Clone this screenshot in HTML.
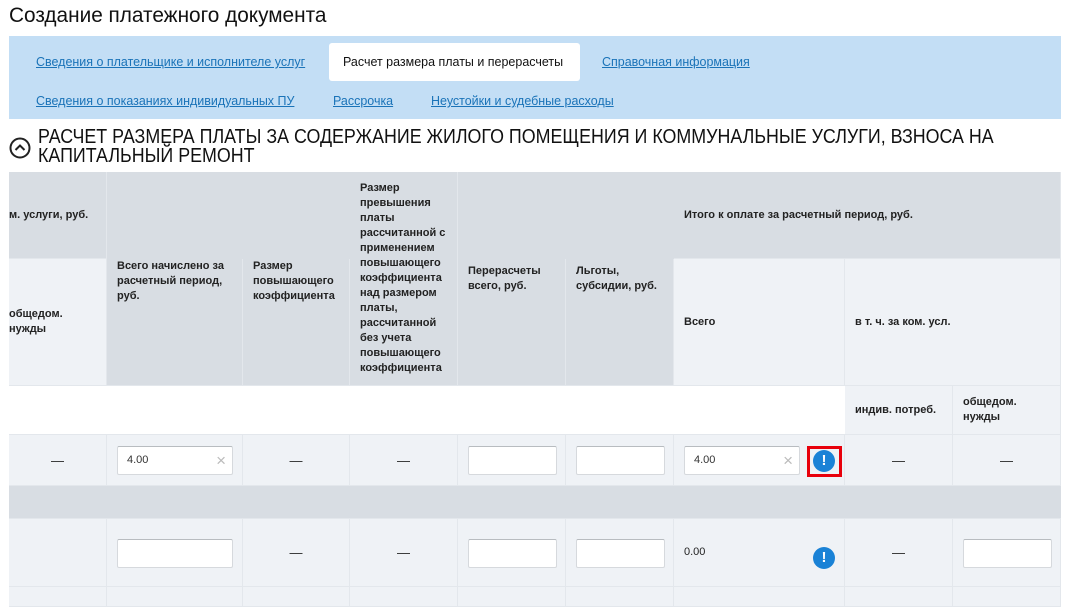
<!DOCTYPE html>
<html><head><meta charset="utf-8"><style>
body{margin:0;width:1074px;height:602px;overflow:hidden;background:#fff;font-family:"Liberation Sans",sans-serif;position:relative}
.a{position:absolute;box-sizing:border-box}
.n{transform-origin:0 0;white-space:nowrap}
.lk{color:#1a73b8;text-decoration:underline;font-size:13px;white-space:nowrap;transform:scaleX(0.96)}
.c{position:absolute;box-sizing:border-box;border-right:1px solid #e3e7ec;border-bottom:1px solid #e3e7ec;font-size:11px;font-weight:bold;color:#222;line-height:15px;padding:0 10px;display:flex;align-items:center}
.g{background:#d8dde3}.l{background:#eff2f6}.w{background:#fff}
.d{justify-content:center;font-weight:normal;font-size:13px}
.inp{position:absolute;background:#fff;border:1px solid #d6d9dd;border-top-color:#b8bcc0;border-radius:2px;box-sizing:border-box;height:29px;font-size:11px;color:#333;padding:7px 0 0 9px}
.ex{position:absolute;width:22px;height:22px;border-radius:50%;background:#1a82d6;color:#fff;font-weight:bold;font-size:15px;text-align:center;line-height:22px}
</style></head><body>
<div class="a n" style="left:9px;top:4px;font-size:21px;color:#111;transform:scaleX(0.99)">Создание платежного документа</div>
<div class="a" style="left:9px;top:36px;width:1052px;height:83px;background:#c3def5"></div>
<div class="a" style="left:329px;top:43px;width:251px;height:38px;background:#fff;border-radius:3px"></div>
<div class="a n lk" style="left:36px;top:54px">Сведения о плательщике и исполнителе услуг</div>
<div class="a n" style="left:343px;top:54px;font-size:13px;color:#111;transform:scaleX(0.96)">Расчет размера платы и перерасчеты</div>
<div class="a n lk" style="left:602px;top:54px">Справочная информация</div>
<div class="a n lk" style="left:36px;top:93px">Сведения о показаниях индивидуальных ПУ</div>
<div class="a n lk" style="left:333px;top:93px">Рассрочка</div>
<div class="a n lk" style="left:431px;top:93px">Неустойки и судебные расходы</div>
<svg class="a" style="left:9px;top:137px" width="22" height="22"><circle cx="11" cy="11" r="9.5" fill="none" stroke="#222" stroke-width="2"/><path d="M6.5 13 L11 8.5 L15.5 13" fill="none" stroke="#222" stroke-width="2"/></svg>
<div class="a n" style="left:38px;top:128px;font-size:20px;line-height:19px;color:#111;transform:scaleX(0.892)">РАСЧЕТ РАЗМЕРА ПЛАТЫ ЗА СОДЕРЖАНИЕ ЖИЛОГО ПОМЕЩЕНИЯ И КОММУНАЛЬНЫЕ УСЛУГИ, ВЗНОСА НА<br>КАПИТАЛЬНЫЙ РЕМОНТ</div>

<div class="c g" style="left:9px;top:172px;width:98px;height:87px;padding-left:0">м. услуги, руб.</div>
<div class="c g" style="left:107px;top:172px;width:567px;height:87px;border-right:none;border-bottom:none"></div>
<div class="c g" style="left:674px;top:172px;width:387px;height:87px">Итого к оплате за расчетный период, руб.</div>
<div class="c l" style="left:9px;top:259px;width:98px;height:127px;padding-left:0">общедом.<br>нужды</div>
<div class="c g" style="left:107px;top:259px;width:136px;height:127px;align-items:flex-start;padding-top:0">Всего начислено за расчетный период, руб.</div>
<div class="c g" style="left:243px;top:259px;width:107px;height:127px;align-items:flex-start">Размер повышающего коэффициента</div>
<div class="c g" style="left:350px;top:172px;width:108px;height:214px;align-items:flex-start;padding-top:9px">Размер превышения платы рассчитанной с применением повышающего коэффициента над размером платы, рассчитанной без учета повышающего коэффициента</div>
<div class="c g" style="left:458px;top:259px;width:108px;height:127px;align-items:flex-start;padding-top:5px">Перерасчеты всего, руб.</div>
<div class="c g" style="left:566px;top:259px;width:108px;height:127px;align-items:flex-start;padding-top:5px">Льготы, субсидии, руб.</div>
<div class="c l" style="left:674px;top:259px;width:171px;height:127px">Всего</div>
<div class="c l" style="left:845px;top:259px;width:216px;height:127px">в т. ч. за ком. усл.</div>
<div class="c w" style="left:9px;top:386px;width:836px;height:49px;border-right:none"></div>
<div class="c l" style="left:845px;top:386px;width:108px;height:49px">индив. потреб.</div>
<div class="c l" style="left:953px;top:386px;width:108px;height:49px">общедом.<br>нужды</div>

<div class="c l d" style="left:9px;top:435px;width:98px;height:51px">—</div>
<div class="c l" style="left:107px;top:435px;width:136px;height:51px"></div>
<div class="c l d" style="left:243px;top:435px;width:107px;height:51px">—</div>
<div class="c l d" style="left:350px;top:435px;width:108px;height:51px">—</div>
<div class="c l" style="left:458px;top:435px;width:108px;height:51px"></div>
<div class="c l" style="left:566px;top:435px;width:108px;height:51px"></div>
<div class="c l" style="left:674px;top:435px;width:171px;height:51px"></div>
<div class="c l d" style="left:845px;top:435px;width:108px;height:51px">—</div>
<div class="c l d" style="left:953px;top:435px;width:108px;height:51px">—</div>
<div class="inp" style="left:117px;top:446px;width:116px">4.00<span style="position:absolute;right:6px;top:4px;color:#bbb;font-size:17px;font-weight:100">×</span></div>
<div class="inp" style="left:468px;top:446px;width:89px"></div>
<div class="inp" style="left:576px;top:446px;width:89px"></div>
<div class="inp" style="left:684px;top:446px;width:116px">4.00<span style="position:absolute;right:6px;top:4px;color:#bbb;font-size:17px;font-weight:100">×</span></div>
<div class="a" style="left:807px;top:446px;width:35px;height:31px;border:3px solid #e8000b"></div>
<div class="ex" style="left:813px;top:450px">!</div>

<div class="a" style="left:9px;top:486px;width:1052px;height:33px;background:#d8dde3;border-bottom:1px solid #e3e7ec"></div>

<div class="c l" style="left:9px;top:519px;width:98px;height:68px"></div>
<div class="c l" style="left:107px;top:519px;width:136px;height:68px"></div>
<div class="c l d" style="left:243px;top:519px;width:107px;height:68px">—</div>
<div class="c l d" style="left:350px;top:519px;width:108px;height:68px">—</div>
<div class="c l" style="left:458px;top:519px;width:108px;height:68px"></div>
<div class="c l" style="left:566px;top:519px;width:108px;height:68px"></div>
<div class="c l" style="left:674px;top:519px;width:171px;height:68px;font-weight:normal;align-items:center">0.00</div>
<div class="c l d" style="left:845px;top:519px;width:108px;height:68px">—</div>
<div class="c l" style="left:953px;top:519px;width:108px;height:68px"></div>
<div class="inp" style="left:117px;top:539px;width:116px"></div>
<div class="inp" style="left:468px;top:539px;width:89px"></div>
<div class="inp" style="left:576px;top:539px;width:89px"></div>
<div class="inp" style="left:963px;top:539px;width:89px"></div>
<div class="ex" style="left:813px;top:547px">!</div>

<div class="c l" style="left:9px;top:587px;width:98px;height:20px"></div>
<div class="c l" style="left:107px;top:587px;width:136px;height:20px"></div>
<div class="c l" style="left:243px;top:587px;width:107px;height:20px"></div>
<div class="c l" style="left:350px;top:587px;width:108px;height:20px"></div>
<div class="c l" style="left:458px;top:587px;width:108px;height:20px"></div>
<div class="c l" style="left:566px;top:587px;width:108px;height:20px"></div>
<div class="c l" style="left:674px;top:587px;width:171px;height:20px"></div>
<div class="c l" style="left:845px;top:587px;width:108px;height:20px"></div>
<div class="c l" style="left:953px;top:587px;width:108px;height:20px"></div>
</body></html>
